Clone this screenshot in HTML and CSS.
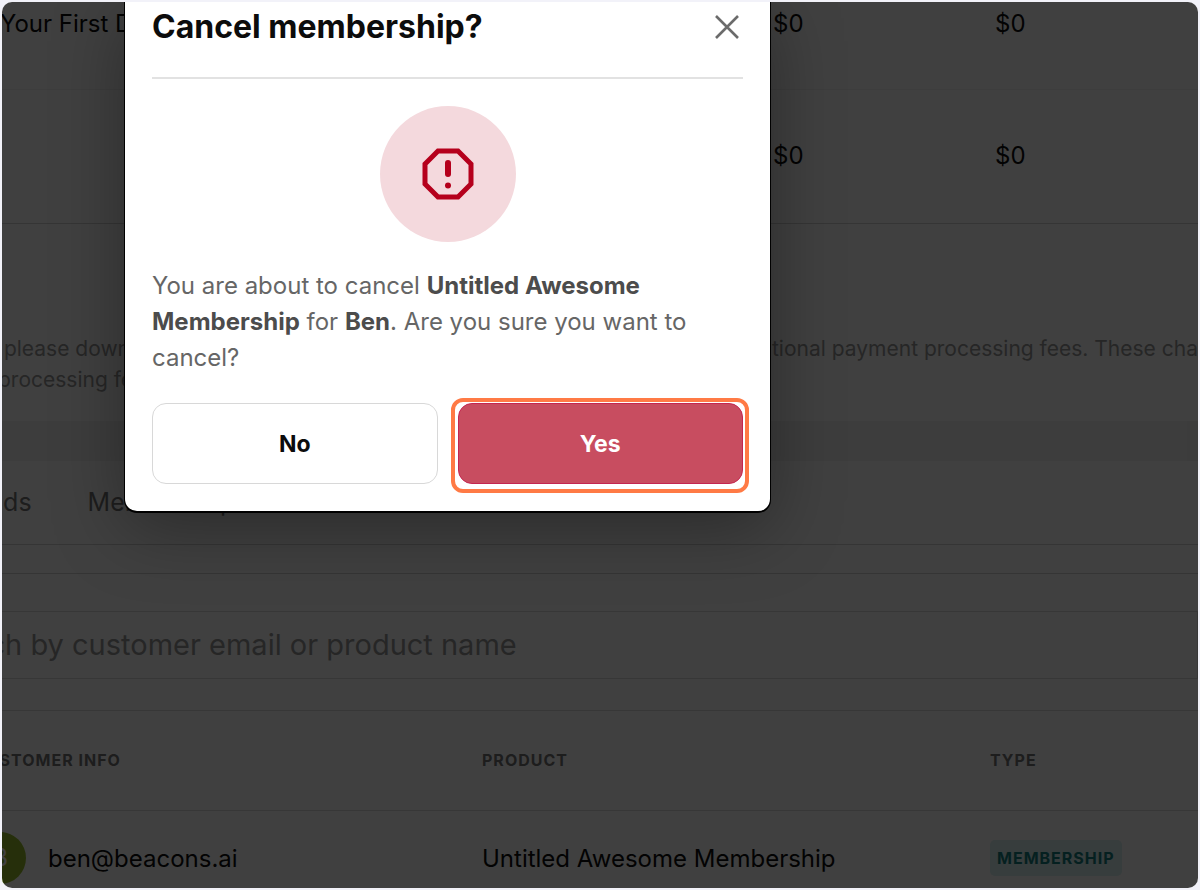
FILE: index.html
```
<!DOCTYPE html>
<html lang="en">
<head>
    <meta charset="UTF-8">
    <title>Cancel membership</title>
    <link rel="stylesheet" href="styles.css">
</head>
<body>
    <div class="frame">
        <div class="page">
            <table class="earnings">
                <tr>
                    <td class="name">Your First Digital</td>
                    <td class="amount">$0</td>
                    <td>$0</td>
                </tr>
                <tr>
                    <td class="name"></td>
                    <td class="amount">$0</td>
                    <td>$0</td>
                </tr>
            </table>
            <div class="note">
                <p class="note-left">&nbsp;please down<br>processing fees</p>
                <p>tional payment processing fees. These charges</p>
            </div>
            <div class="band"></div>
            <div class="tabs">
                <a href="#" class="tab">Refunds</a>
                <a href="#" class="tab">Memberships</a>
            </div>
            <div class="search">
                <input type="text" class="search-input" aria-label="Search orders" placeholder="Search by customer email or product name">
            </div>
            <table class="orders">
                <thead>
                    <tr>
                        <th class="customer">CUSTOMER INFO</th>
                        <th class="product">PRODUCT</th>
                        <th>TYPE</th>
                    </tr>
                </thead>
                <tbody>
                    <tr>
                        <td class="customer">
                            <div class="person">
                                <span class="avatar">B</span>
                                <span>ben@beacons.ai</span>
                            </div>
                        </td>
                        <td class="product">Untitled Awesome Membership</td>
                        <td><span class="badge">MEMBERSHIP</span></td>
                    </tr>
                </tbody>
            </table>
        </div>
        <div class="overlay">
            <div class="modal" role="dialog" aria-labelledby="title">
                <div class="modal-head">
                    <h2 id="title">Cancel membership?</h2>
                    <button class="close" aria-label="Close">
                        <svg width="32" height="32" viewBox="0 0 32 32" fill="none" stroke="#6b6b6b" stroke-width="2.6">
                            <path d="M5 5L27 27M27 5L5 27"/>
                        </svg>
                    </button>
                </div>
                <div class="warning">
                    <svg width="52" height="52" viewBox="0 0 52 52" fill="none" stroke="#b5001c">
                        <path d="M16 3H36L49 16V36L36 49H16L3 36V16Z" stroke-width="5"/>
                        <path d="M26 15V26" stroke-width="6" stroke-linecap="round"/>
                        <circle cx="26" cy="37.500" r="3" fill="#b5001c" stroke="none"/>
                    </svg>
                </div>
                <p class="message">You are about to cancel <b>Untitled Awesome Membership</b> for <b>Ben</b>. Are you sure you want to cancel?</p>
                <div class="actions">
                    <button class="btn">No</button>
                    <button class="btn yes">Yes</button>
                </div>
            </div>
        </div>
    </div>
</body>
</html>
```
FILE: styles.css
```
*{
    margin: 0;
    padding: 0;
    box-sizing: border-box;
}
body{
    padding: 2px;
    background-color: #f2f2f9;
    font-family: "Inter", sans-serif;
    font-size: 24px;
    color: #0c0c0c;
}
.frame{
    position: relative;
    height: calc(100vh - 4px);
    border-radius: 10px;
    overflow: hidden;
    background-color: #fff;
}
/* page behind the dialog, scrolled a bit down and right */
.page{
    margin: -45px 0 0 -80px;
}
table{
    width: 100%;
    table-layout: fixed;
    border-collapse: separate;
    border-spacing: 0;
}
td,th{
    text-align: left;
    font-weight: 400;
    white-space: nowrap;
}
.earnings td{
    height: 133px;
    border-bottom: 1px solid #f2f2f2;
}
.earnings tr:last-child td{
    height: 134px;
    padding-bottom: 2px;
    border-bottom: 1px solid #d4d4d4;
}
.earnings .name{
    width: 851px;
    padding-left: 78px;
}
.earnings .amount{
    width: 222px;
}
.note{
    display: flex;
    padding: 109px 0 26px 76px;
    font-size: 21px;
    line-height: 31px;
    color: #989898;
    white-space: nowrap;
}
.note-left{
    flex: none;
    width: 774px;
}
.band{
    height: 40px;
    background-color: #f4f4f4;
    border-right: 11px solid #f0f0f0;
}
.tabs{
    display: flex;
    gap: 56px;
    align-items: center;
    height: 84px;
    padding-left: 12px;
    padding-bottom: 2px;
    border-bottom: 1px solid #d4d4d4;
    font-size: 25px;
}
.tab{
    color: #767676;
    text-decoration: none;
}
.search{
    margin-top: 28px;
    padding: 37px 0 31px;
    border-top: 1px solid #d4d4d4;
}
.search-input{
    display: block;
    width: 100%;
    height: 68px;
    padding: 0 3px 2px;
    border: 1px solid #dcdcdc;
    background-color: #fff;
    font-family: inherit;
    font-size: 29px;
    outline: none;
}
.search-input::placeholder{
    color: #989898;
}
.orders th{
    height: 101px;
    padding-bottom: 2px;
    border-top: 1px solid #dcdcdc;
    border-bottom: 1px solid #dcdcdc;
    font-size: 16px;
    font-weight: 700;
    letter-spacing: 1px;
    color: #767676;
}
.orders td{
    height: 94px;
}
.orders .customer{
    width: 560px;
    padding-left: 52px;
}
.orders .product{
    width: 508px;
}
.person{
    display: flex;
    align-items: center;
    gap: 22px;
}
.avatar{
    width: 52px;
    height: 52px;
    border-radius: 50%;
    background-color: #96bd2c;
    color: #fff;
    line-height: 52px;
    text-align: center;
}
.badge{
    display: inline-block;
    padding: 0 7px;
    border-radius: 5px;
    background-color: #d9f1f1;
    color: #148080;
    font-size: 16px;
    font-weight: 700;
    line-height: 36px;
    letter-spacing: 1px;
}
.overlay{
    position: absolute;
    top: 0;
    right: 0;
    bottom: 0;
    left: 0;
    padding-left: 123px;
    background-color: rgba(0,0,0,0.75);
}
.modal{
    max-width: 645px;
    padding: 0 27px 27px;
    border-radius: 0 0 12px 12px;
    background-color: #fff;
    box-shadow: 0 1px 0 1px #000, 0 16px 70px rgba(0,0,0,0.35);
}
.modal-head{
    display: flex;
    justify-content: space-between;
    align-items: center;
    height: 77px;
    padding-bottom: 26px;
    border-bottom: 2px solid #e2e2e2;
}
.modal-head h2{
    font-size: 32px;
    line-height: 40px;
}
.close{
    width: 32px;
    height: 32px;
    border: 0;
    background: none;
    cursor: pointer;
}
.warning{
    display: flex;
    align-items: center;
    justify-content: center;
    width: 136px;
    height: 136px;
    margin: 27px auto 26px;
    border-radius: 50%;
    background-color: #f4d9dd;
}
.message{
    line-height: 36px;
    color: #666;
}
.message b{
    color: #4c4c4c;
}
.actions{
    display: flex;
    gap: 20px;
    margin-top: 27px;
}
.btn{
    flex: 1;
    height: 81px;
    border: 1px solid #d8d8d8;
    border-radius: 14px;
    background-color: #fff;
    color: #0c0c0c;
    font-family: inherit;
    font-size: 23px;
    font-weight: 700;
    cursor: pointer;
}
.yes{
    position: relative;
    border-color: #c42650;
    background-color: #c84d60;
    color: #fff;
}
/* highlight ring round the button */
.yes::after{
    content: "";
    position: absolute;
    top: -6px;
    right: -7px;
    bottom: -10px;
    left: -8px;
    border: 4px solid #ff7a45;
    border-radius: 12px;
}
```
